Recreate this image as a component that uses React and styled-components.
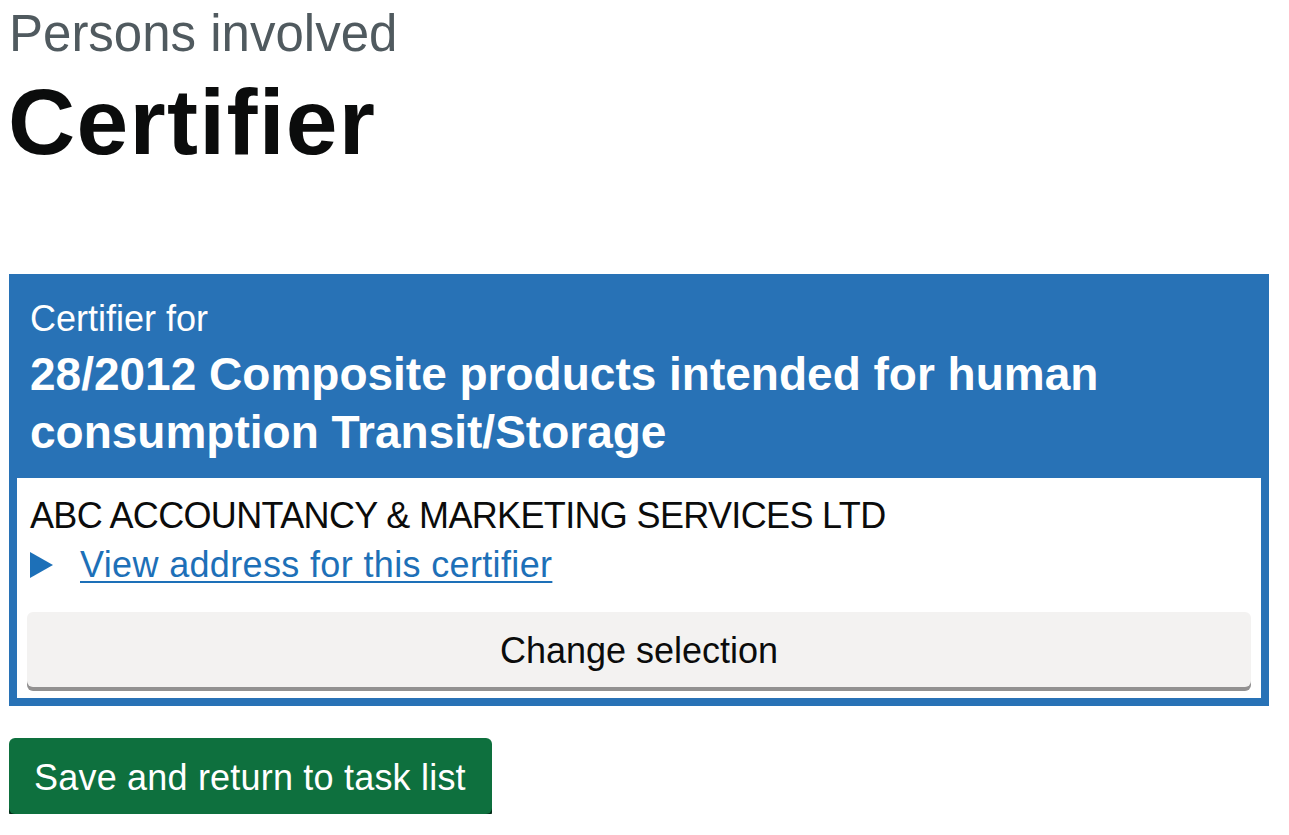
import React from 'react'
import styled, { createGlobalStyle } from 'styled-components'

const GlobalStyle = createGlobalStyle`
  html, body {
    margin: 0;
    padding: 0;
    background: #ffffff;
  }
  body {
    font-family: "Liberation Sans", Arial, sans-serif;
    color: #0b0c0c;
  }
`

const Page = styled.main`
  padding: 6px 0 0 9px;
  width: 1260px;
`

const Caption = styled.span`
  display: block;
  margin-left: 0;
  font-size: 51px;
  line-height: 56px;
  color: #505a5f;
`

const Heading = styled.h1`
  margin: 10px 0 0 -1px;
  font-size: 93px;
  line-height: 101px;
  font-weight: 700;
  letter-spacing: 1.3px;
  color: #0b0c0c;
`

const Panel = styled.section`
  margin-top: 101px;
  background: #2872b6;
  padding: 0 8px 8px;
`

const PanelHeader = styled.div`
  padding: 21px 13px 17px;
  color: #ffffff;
`

const PanelCaption = styled.span`
  display: block;
  font-size: 36px;
  line-height: 47px;
`

const PanelTitle = styled.h2`
  margin: 3px 0 0;
  font-size: 46px;
  line-height: 58px;
  font-weight: 700;
`

const PanelBody = styled.div`
  background: #ffffff;
  padding: 14px 10px 11px;
`

const BodyText = styled.p`
  margin: 0;
  padding: 0 3px;
  font-size: 36px;
  line-height: 47px;
  letter-spacing: -0.65px;
  color: #0b0c0c;
`

const Details = styled.div`
  display: flex;
  align-items: center;
  gap: 27px;
  margin-top: 2px;
  padding: 0 3px;
  height: 47px;
`

const Triangle = styled.span`
  display: block;
  width: 0;
  height: 0;
  border-style: solid;
  border-width: 13px 0 13px 23px;
  border-color: transparent transparent transparent #1d70b8;
`

const Link = styled.a`
  font-size: 36px;
  line-height: 47px;
  letter-spacing: 0.35px;
  color: #1d70b8;
  text-decoration: underline;
  text-decoration-thickness: 2px;
  text-underline-offset: 4px;
  cursor: pointer;
`

const Button = styled.button`
  display: block;
  box-sizing: border-box;
  font-family: "Liberation Sans", Arial, sans-serif;
  font-size: 36px;
  line-height: 43px;
  padding: 15px 24px 13px;
  border: 2px solid transparent;
  border-radius: 6px;
  cursor: pointer;
  text-align: center;
  color: ${({ $primary }) => ($primary ? '#ffffff' : '#0b0c0c')};
  background: ${({ $primary }) => ($primary ? '#0e703e' : '#f3f2f1')};
  box-shadow: 0 4px 0 ${({ $primary }) => ($primary ? '#002d18' : '#929191')};
  width: ${({ $full }) => ($full ? '100%' : 'auto')};
`

const SelectionButton = styled(Button)`
  margin-top: 24px;
`

const SaveButton = styled(Button)`
  margin-top: 32px;
  padding: 16px 24px 13px 23px;
  letter-spacing: 0.2px;
`

const App = () => (
  <>
    <GlobalStyle />
    <Page>
      <Caption>Persons involved</Caption>
      <Heading>Certifier</Heading>
      <Panel>
        <PanelHeader>
          <PanelCaption>Certifier for</PanelCaption>
          <PanelTitle>28/2012 Composite products intended for human consumption Transit/Storage</PanelTitle>
        </PanelHeader>
        <PanelBody>
          <BodyText>ABC ACCOUNTANCY &amp; MARKETING SERVICES LTD</BodyText>
          <Details>
            <Triangle />
            <Link>View address for this certifier</Link>
          </Details>
          <SelectionButton $full>Change selection</SelectionButton>
        </PanelBody>
      </Panel>
      <SaveButton $primary>Save and return to task list</SaveButton>
    </Page>
  </>
)

export default App
